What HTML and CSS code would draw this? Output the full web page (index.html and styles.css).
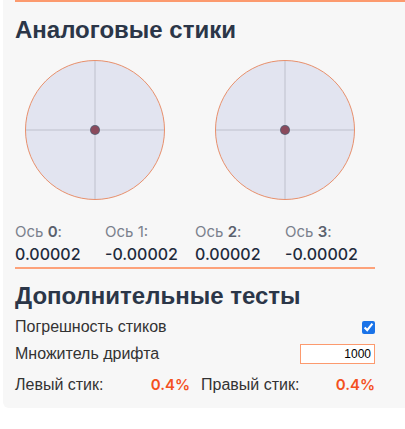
FILE: index.html
```html
<!DOCTYPE html>
<html lang="ru">
<head>
    <meta charset="UTF-8">
    <meta name="viewport" content="width=device-width, initial-scale=1.0">
    <title>Тест геймпада</title>
    <link rel="stylesheet" href="styles.css">
</head>
<body>
    <div class="panel">
        <div class="top-rule"></div>

        <h2 class="first">Аналоговые стики</h2>
        <div class="sticks">
            <div class="stick">
                <div class="dot"></div>
            </div>
            <div class="stick">
                <div class="dot"></div>
            </div>
        </div>

        <div class="axes">
            <div class="axis">
                <span class="axis-name">Ось <b>0</b>:</span>
                <span class="axis-value">0.00002</span>
            </div>
            <div class="axis">
                <span class="axis-name">Ось 1:</span>
                <span class="axis-value">-0.00002</span>
            </div>
            <div class="axis">
                <span class="axis-name">Ось <b>2</b>:</span>
                <span class="axis-value">0.00002</span>
            </div>
            <div class="axis">
                <span class="axis-name">Ось <b>3</b>:</span>
                <span class="axis-value">-0.00002</span>
            </div>
        </div>
        <div class="axes-rule"></div>

        <!-- Extra tests -->
        <h2 class="second">Дополнительные тесты</h2>
        <div class="row row-check">
            <label for="stickError">Погрешность стиков</label>
            <input type="checkbox" id="stickError" checked>
        </div>
        <div class="row row-input">
            <label for="driftMul">Множитель дрифта</label>
            <input type="text" id="driftMul" class="num-input" value="1000">
        </div>
        <div class="row drift">
            <div class="drift-item">
                <span>Левый стик:</span>
                <span class="drift-value">0.4%</span>
            </div>
            <div class="drift-item">
                <span>Правый стик:</span>
                <span class="drift-value">0.4%</span>
            </div>
        </div>
    </div>
</body>
</html>
```

FILE: styles.css
```css
/* Page */
body {
    margin: 0;
    background: #ffffff;
    font-family: 'Liberation Sans', Arial, sans-serif;
    overflow: hidden;
}

/* Panel */
.panel {
    margin-left: 3px;
    width: 402px;
    height: 408px;
    box-sizing: border-box;
    padding: 0 12px;
    background: #f7f7f7;
    border-radius: 0 0 0 6px;
}

.top-rule {
    margin-right: -12px;
    height: 2px;
    background: #fc9a6e;
}

h2 {
    margin: 0;
    font-size: 24px;
    line-height: 28px;
    font-weight: 700;
    color: #2b3648;
}

h2.first {
    margin-top: 14px;
}

h2.second {
    margin-top: 13px;
}

/* Sticks */
.sticks {
    display: grid;
    grid-template-columns: 190px 190px;
    margin-top: 16px;
}

.stick {
    position: relative;
    width: 138px;
    height: 138px;
    margin-left: 10px;
    border: 1px solid #e8906c;
    border-radius: 50%;
    background-color: #e2e4f0;
    background-image:
        linear-gradient(#d0d2de, #d0d2de),
        linear-gradient(#d0d2de, #d0d2de);
    background-size: 2px 100%, 100% 2px;
    background-position: center, center;
    background-repeat: no-repeat;
}

.dot {
    position: absolute;
    left: 50%;
    top: 50%;
    width: 8px;
    height: 8px;
    margin: -4px 0 0 -4px;
    border-radius: 50%;
    background: #8a4a5c;
    box-shadow: 0 0 0 1px #5d6275;
}

/* Axis values */
.axes {
    display: grid;
    grid-template-columns: repeat(4, 90px);
    width: 360px;
    height: 45px;
    margin-top: 22px;
}

.axes-rule {
    width: 360px;
    height: 2px;
    background: #fda27a;
}

.axis {
    display: flex;
    flex-direction: column;
    font-family: 'Inter', sans-serif;
}

.axis-name {
    font-size: 15px;
    color: #7a808c;
    line-height: 20px;
}

.axis-name b {
    font-weight: 600;
    color: #5a606c;
}

.axis-value {
    font-size: 16px;
    font-weight: 500;
    color: #1e2a3c;
    line-height: 25px;
}

/* Settings rows */
.row {
    display: flex;
    justify-content: space-between;
    align-items: center;
    width: 360px;
    font-size: 16px;
    color: #333333;
}

.row-check {
    margin-top: 4px;
    height: 26px;
}

.row-input {
    height: 28px;
}

label {
    color: #333333;
}

input[type="checkbox"] {
    width: 13px;
    height: 13px;
    margin: 0 0 0 0;
    accent-color: #1a73e8;
}

.num-input {
    width: 75px;
    height: 20px;
    box-sizing: border-box;
    margin: 0;
    padding: 0 3px;
    border: 1px solid #fc9a6e;
    background: #ffffff;
    text-align: right;
    font-family: 'Liberation Sans', Arial, sans-serif;
    font-size: 12px;
    color: #000000;
}

.drift {
    height: 32px;
}

.drift-item {
    display: flex;
    justify-content: space-between;
    align-items: baseline;
    width: 175px;
}

.drift-item + .drift-item {
    width: 174px;
}

.drift-value {
    font-family: 'Inter', sans-serif;
    font-size: 15px;
    font-weight: 600;
    color: #f4511e;
}
```
